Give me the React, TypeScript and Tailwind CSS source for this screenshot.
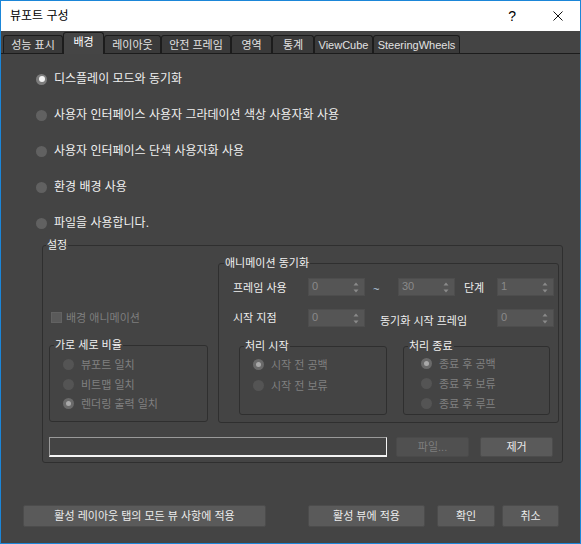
import React from "react";

function Radio({ checked, disabled }: { checked?: boolean; disabled?: boolean }) {
  if (disabled) {
    return checked ? (
      <span className="w-[11px] h-[11px] rounded-full bg-[#6a6a6a] flex items-center justify-center shrink-0">
        <span className="w-[5px] h-[5px] rounded-full bg-[#a9a9a9]" />
      </span>
    ) : (
      <span className="w-[11px] h-[11px] rounded-full bg-[#545454] shrink-0" />
    );
  }
  return checked ? (
    <span className="w-[11px] h-[11px] rounded-full bg-[#7c7c7c] flex items-center justify-center shrink-0">
      <span className="w-[6px] h-[6px] rounded-full bg-[#f2f2f2]" />
    </span>
  ) : (
    <span className="w-[11px] h-[11px] rounded-full bg-[#616161] shrink-0" />
  );
}

function Spinner({ value }: { value: string }) {
  return (
    <div className="w-[57px] h-[18px] bg-[#555555] border border-[#4d4d4d] flex items-start justify-between pl-[3px] pr-[5px] text-[11px] leading-[14px] text-[#8a8a8a]">
      <span>{value}</span>
      <svg width="6" height="11" viewBox="0 0 6 11" className="self-center">
        <path d="M3 0.5L5.5 3.5H0.5Z M3 10.5L0.5 7.5H5.5Z" fill="#8a8a8a" />
      </svg>
    </div>
  );
}

function Legend({ title, left }: { title: string; left: string }) {
  return (
    <span
      className={
        "absolute -top-[8px] bg-[#444444] px-[1px] text-[11px] leading-[14px] text-[#f0f0f0] whitespace-nowrap " +
        left
      }
    >
      {title}
    </span>
  );
}

const tabs = [
  { label: "성능 표시", w: "w-[60px]" },
  { label: "배경", w: "w-[41px]", active: true },
  { label: "레이아웃", w: "w-[57px]" },
  { label: "안전 프레임", w: "w-[70px]" },
  { label: "영역", w: "w-[41px]" },
  { label: "통계", w: "w-[42px]" },
  { label: "ViewCube", w: "w-[59px]" },
  { label: "SteeringWheels", w: "w-[87px]" },
];

const modes = [
  "디스플레이 모드와 동기화",
  "사용자 인터페이스 사용자 그라데이션 색상 사용자화 사용",
  "사용자 인터페이스 단색 사용자화 사용",
  "환경 배경 사용",
  "파일을 사용합니다.",
];

export default function App() {
  return (
    <div className="w-[581px] h-[544px] border border-[#1b86d8] bg-[#444444] flex flex-col overflow-hidden font-['Liberation_Sans','Noto_Sans_CJK_KR',sans-serif]">
      {/* Title bar */}
      <div className="h-[30px] bg-white flex items-center pl-[9px] shrink-0">
        <span className="text-[12px] leading-[16px] text-black">뷰포트 구성</span>
        <span className="ml-auto text-[14px] leading-[16px] text-black">?</span>
        <svg width="10" height="10" viewBox="0 0 10 10" className="ml-[37px] mr-[17px]">
          <path d="M0.5 0.5L9.5 9.5M9.5 0.5L0.5 9.5" stroke="#111" strokeWidth="1" />
        </svg>
      </div>

      {/* Tabs */}
      <div className="h-[22px] flex items-end pl-[2px] shrink-0">
        {tabs.map((t) =>
          t.active ? (
            <div
              key={t.label}
              className={
                "relative z-10 h-[22px] -mb-px bg-[#454545] border border-b-0 border-[#1c1c1c] rounded-t-[3px] flex items-center justify-center text-[11px] leading-[14px] text-white pb-[3px] " +
                t.w
              }
            >
              {t.label}
            </div>
          ) : (
            <div
              key={t.label}
              className={
                "h-[18px] bg-[#3a3a3a] border border-b-0 border-[#1c1c1c] rounded-t-[3px] flex items-center justify-center text-[11px] leading-[14px] text-[#e2e2e2] " +
                t.w
              }
            >
              {t.label}
            </div>
          )
        )}
      </div>

      {/* Panel */}
      <div className="flex-1 border-t border-[#1c1c1c] flex flex-col">
        <div className="pl-[35px] pt-[17px] flex flex-col gap-[20px] text-[12px] text-[#f0f0f0]">
          {modes.map((m, i) => (
            <div key={m} className="h-[16px] flex items-center gap-[7px]">
              <Radio checked={i === 0} />
              <span className="leading-[16px] whitespace-nowrap">{m}</span>
            </div>
          ))}
        </div>

        {/* 설정 */}
        <div className="relative ml-[41px] mt-[14px] w-[521px] h-[218px] border border-[#2f2f2f] rounded-[3px] pl-[6px] pr-[3px] pt-[17px] flex flex-col">
          <Legend title="설정" left="left-[3px]" />

          <div className="flex h-[160px] gap-[10px]">
            {/* left column */}
            <div className="w-[159px] flex flex-col justify-end pb-[1px]">
              <div className="flex items-center gap-[4px] pl-[2px] h-[11px]">
                <span className="w-[11px] h-[11px] bg-[#5a5a5a] border border-[#626262] shrink-0" />
                <span className="text-[11px] leading-[14px] text-[#7e7e7e] whitespace-nowrap">배경 애니메이션</span>
              </div>
              <div className="relative mt-[22px] h-[77px] border border-[#2f2f2f] rounded-[3px] pl-[13px] pt-[11px] flex flex-col gap-[5px]">
                <Legend title="가로 세로 비율" left="left-[4px]" />
                {["뷰포트 일치", "비트맵 일치", "렌더링 출력 일치"].map((l, i) => (
                  <div key={l} className={"h-[15px] flex items-center gap-[7px] " + (i === 2 ? "-mt-px" : "")}>
                    <Radio disabled checked={i === 2} />
                    <span className="text-[11px] leading-[14px] text-[#808080] whitespace-nowrap">{l}</span>
                  </div>
                ))}
              </div>
            </div>

            {/* 애니메이션 동기화 */}
            <div className="relative w-[341px] h-[160px] border border-[#2f2f2f] rounded-[3px] pl-[14px] pt-[14px] flex flex-col">
              <Legend title="애니메이션 동기화" left="left-[5px]" />
              <div className="flex items-center h-[18px] text-[11px] leading-[14px] text-[#eeeeee]">
                <span className="w-[75px] whitespace-nowrap pt-[2px]">프레임 사용</span>
                <Spinner value="0" />
                <span className="w-[33px] pl-[8px] pt-[4px] text-[#b9cde0]">~</span>
                <Spinner value="30" />
                <span className="w-[42px] pl-[9px] pt-[2px] whitespace-nowrap">단계</span>
                <Spinner value="1" />
              </div>
              <div className="flex items-center h-[18px] mt-[13px] text-[11px] leading-[14px] text-[#eeeeee]">
                <span className="w-[75px] whitespace-nowrap">시작 지점</span>
                <Spinner value="0" />
                <span className="w-[132px] pl-[15px] pt-[5px] whitespace-nowrap">동기화 시작 프레임</span>
                <Spinner value="0" />
              </div>
              <div className="flex mt-[19px] ml-[6px] gap-[16px]">
                <div className="relative w-[148px] h-[69px] border border-[#2f2f2f] rounded-[3px] pl-[13px] pt-[10px] flex flex-col gap-[6px]">
                  <Legend title="처리 시작" left="left-[4px]" />
                  {["시작 전 공백", "시작 전 보류"].map((l, i) => (
                    <div key={l} className="h-[15px] flex items-center gap-[7px]">
                      <Radio disabled checked={i === 0} />
                      <span className="text-[11px] leading-[14px] text-[#808080] whitespace-nowrap">{l}</span>
                    </div>
                  ))}
                </div>
                <div className="relative w-[147px] h-[69px] border border-[#2f2f2f] rounded-[3px] pl-[17px] pt-[9px] flex flex-col gap-[5px]">
                  <Legend title="처리 종료" left="left-[4px]" />
                  {["종료 후 공백", "종료 후 보류", "종료 후 루프"].map((l, i) => (
                    <div key={l} className="h-[15px] flex items-center gap-[7px]">
                      <Radio disabled checked={i === 0} />
                      <span className="text-[11px] leading-[14px] text-[#808080] whitespace-nowrap">{l}</span>
                    </div>
                  ))}
                </div>
              </div>
            </div>
          </div>

          {/* file row */}
          <div className="flex h-[20px] mt-[14px]">
            <div className="w-[338px] h-[20px] bg-[#444444] border border-[#9a9a9a] border-b-[#f4f4f4] border-r-[#f4f4f4] border-b-2" />
            <div className="ml-[9px] w-[73px] h-[20px] bg-[#505050] border border-[#4a4a4a] rounded-[2px] flex items-center justify-center text-[11px] leading-[14px] text-[#7e7e7e]">
              파일...
            </div>
            <div className="ml-[11px] w-[73px] h-[20px] bg-[#5a5a5a] border border-[#4c4c4c] rounded-[2px] flex items-center justify-center text-[11px] leading-[14px] text-[#ececec]">
              제거
            </div>
          </div>
        </div>

        {/* bottom buttons */}
        <div className="flex h-[22px] mt-[42px] pl-[22px] text-[11px] leading-[14px] text-[#ececec]">
          <div className="w-[243px] h-[22px] bg-[#5a5a5a] border border-[#4c4c4c] rounded-[2px] flex items-center justify-center whitespace-nowrap">
            활성 레이아웃 탭의 모든 뷰 사항에 적용
          </div>
          <div className="ml-[42px] w-[117px] h-[22px] bg-[#5a5a5a] border border-[#4c4c4c] rounded-[2px] flex items-center justify-center whitespace-nowrap">
            활성 뷰에 적용
          </div>
          <div className="ml-[12px] w-[58px] h-[22px] bg-[#5a5a5a] border border-[#4c4c4c] rounded-[2px] flex items-center justify-center">
            확인
          </div>
          <div className="ml-[7px] w-[57px] h-[22px] bg-[#5a5a5a] border border-[#4c4c4c] rounded-[2px] flex items-center justify-center">
            취소
          </div>
        </div>
      </div>
    </div>
  );
}
